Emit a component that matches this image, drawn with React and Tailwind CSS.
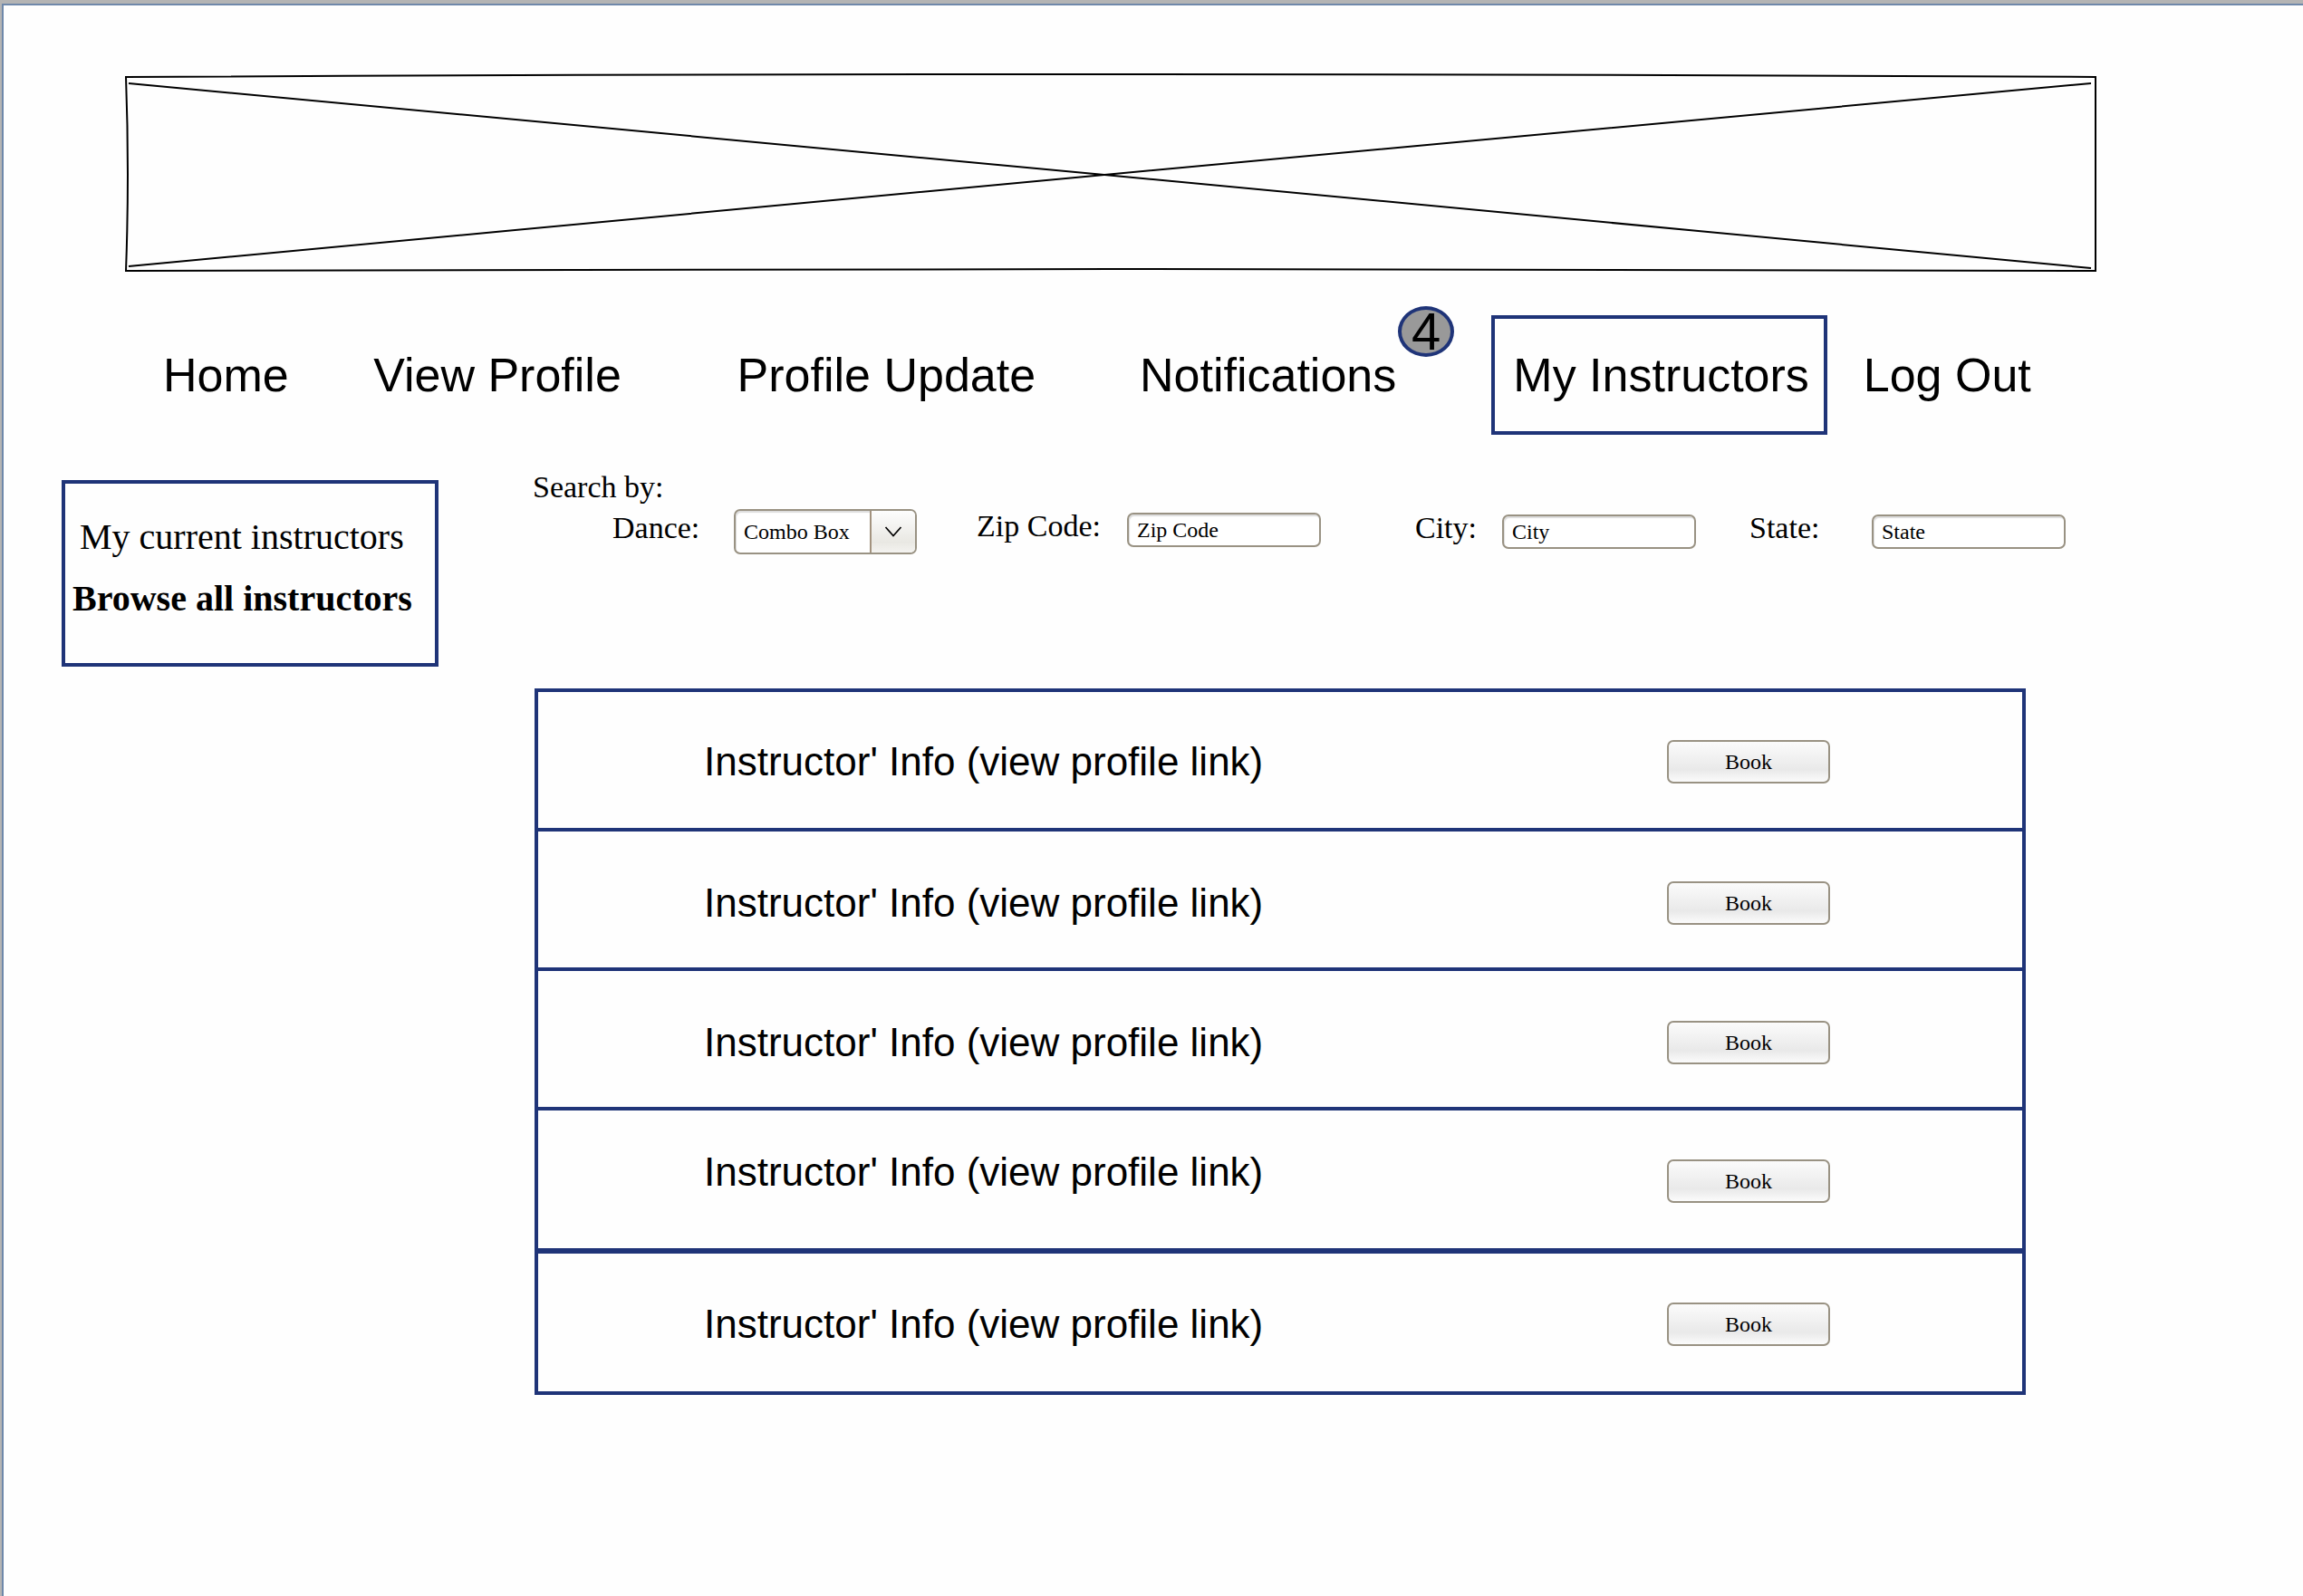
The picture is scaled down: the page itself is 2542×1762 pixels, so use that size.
import React from "react";

const instructors = [
  { id: 1, row: "h-[154px] border-t-4 pt-1", link: "" },
  { id: 2, row: "h-[154px] border-t-4 pt-2", link: "" },
  { id: 3, row: "h-[154px] border-t-4 pt-2", link: "" },
  { id: 4, row: "h-[156px] border-t-4 pt-1", link: "pb-5" },
  { id: 5, row: "h-[158px] border-t-[6px] pt-1", link: "" },
];

const fieldFont = "font-['Liberation_Serif',serif] text-[24px]";

function Banner() {
  return (
    <svg
      viewBox="0 0 2178 220"
      className="block h-auto w-full"
      fill="none"
      stroke="#000"
      strokeWidth="2"
      role="img"
      aria-label="Banner placeholder"
    >
      <path d="M1 5 Q1088 -1 2175 5 V219 Q1088 215 1 219 Q5 112 1 5 Z" />
      <path d="M4 12 L1081 113 L2170 216" />
      <path d="M4 214 L1081 113 L2170 12" />
    </svg>
  );
}

function Nav() {
  return (
    <nav className="mt-12 grid grid-cols-[232fr_401fr_444fr_388fr_410fr_259fr] items-center pl-[42px] text-[52px] leading-[60px] whitespace-nowrap">
      <a href="#home">Home</a>
      <a href="#profile">View Profile</a>
      <a href="#update">Profile Update</a>
      <a href="#notifications" className="relative justify-self-start">
        Notifications
        <span className="absolute bottom-[50px] left-full ml-0.5 flex h-14 w-[62px] items-center justify-center rounded-[50%] border-4 border-[#1f3478] bg-[#999999] text-[58px] leading-none">
          4
        </span>
      </a>
      <a
        href="#instructors"
        aria-current="page"
        className="flex h-[132px] items-center justify-self-start border-4 border-[#1f3478] pr-4 pl-5"
      >
        My Instructors
      </a>
      <a href="#logout">Log Out</a>
    </nav>
  );
}

function Label({ htmlFor, className, children }) {
  return (
    <label
      htmlFor={htmlFor}
      className={"shrink-0 pb-2 text-[34px] leading-9 whitespace-nowrap " + className}
    >
      {children}
    </label>
  );
}

function TextField({ id, value }) {
  return (
    <input
      id={id}
      type="text"
      defaultValue={value}
      className={
        "h-[38px] w-[214px] rounded-[7px] border-2 border-[#999283] bg-white px-[9px] shadow-[inset_1px_2px_1px_#dddddd] outline-none " +
        fieldFont
      }
    />
  );
}

function Filters() {
  return (
    <form className="font-['Liberation_Serif',serif]">
      <p className="text-[34px] leading-[40px]">Search by:</p>
      <div className="mt-1 grid grid-cols-[402fr_484fr_369fr_349fr] pl-[88px]">
        <div className="flex items-center">
          <Label htmlFor="dance" className="w-[134px]">Dance:</Label>
          <div className="relative">
            <select
              id="dance"
              className={
                "block h-[50px] w-[202px] appearance-none rounded-[7px] border-2 border-[#999283] bg-white pl-[9px] shadow-[inset_1px_2px_1px_#dddddd] outline-none " +
                fieldFont
              }
            >
              <option>Combo Box</option>
            </select>
            <span className="pointer-events-none absolute inset-y-0.5 right-0.5 flex w-[50px] items-center justify-center rounded-r-[5px] border-l-2 border-[#a3937f] bg-linear-to-b from-[#fdfdfd] via-[#e9e8e3] via-75% to-[#f4f3f0]">
              <svg viewBox="0 0 20 12" className="h-3 w-5" fill="none" stroke="#000" strokeWidth="1.700">
                <path d="M1.500 1 L10 10.500 L18.500 1" />
              </svg>
            </span>
          </div>
        </div>
        <div className="flex items-center pb-1">
          <Label htmlFor="zip" className="w-[166px]">Zip Code:</Label>
          <TextField id="zip" value="Zip Code" />
        </div>
        <div className="flex items-center">
          <Label htmlFor="city" className="w-[96px]">City:</Label>
          <TextField id="city" value="City" />
        </div>
        <div className="flex items-center">
          <Label htmlFor="state" className="w-[135px]">State:</Label>
          <TextField id="state" value="State" />
        </div>
      </div>
    </form>
  );
}

function InstructorRow({ row, link }) {
  return (
    <li
      className={
        "flex items-center justify-between border-[#1f3478] pr-[212px] pl-[183px] " + row
      }
    >
      <a href="#instructor" className={"text-[44px] leading-[52px] " + link}>
        Instructor' Info (view profile link)
      </a>
      <button
        type="button"
        className={
          "h-12 w-[180px] rounded-[7px] border-2 border-[#999283] bg-linear-to-b from-[#fbfbfb] via-[#e9e9e9] via-70% to-[#fbfbfb] " +
          fieldFont
        }
      >
        Book
      </button>
    </li>
  );
}

export default function App() {
  return (
    <div className="flex min-h-screen bg-[#b4b4b4] pt-1 pl-0.5 font-['Liberation_Sans',sans-serif] text-black">
      <div className="flex-1 border-t-2 border-l-2 border-[#6f88aa] bg-[#fefefe] pt-[74px]">
        <header className="pr-[226px] pl-[134px]">
          <Banner />
          <Nav />
        </header>
        <div className="mt-[38px] flex items-start gap-[104px] pr-[262px] pl-16">
          <aside className="mt-3 flex w-[416px] shrink-0 flex-col gap-5 border-4 border-[#1f3478] pt-[35px] pb-[47px] font-['Liberation_Serif',serif] text-[40px] leading-[48px] whitespace-nowrap">
            <a href="#current" className="pl-4">My current instructors</a>
            <a href="#browse" className="pl-2 font-bold">Browse all instructors</a>
          </aside>
          <main className="min-w-0 flex-1">
            <Filters />
            <ul className="mt-[148px] mr-11 ml-0.5 border-x-4 border-b-4 border-[#1f3478]">
              {instructors.map(({ id, row, link }) => (
                <InstructorRow key={id} row={row} link={link} />
              ))}
            </ul>
          </main>
        </div>
      </div>
    </div>
  );
}
